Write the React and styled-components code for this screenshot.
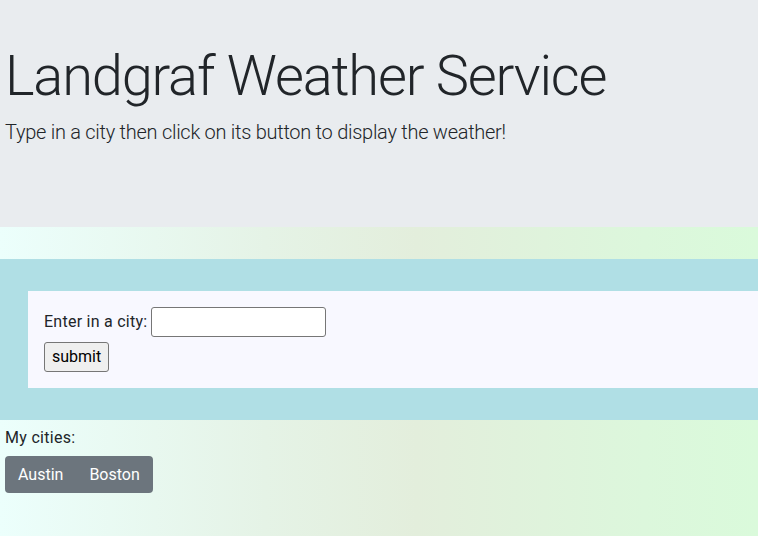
import React from "react";
import styled, { createGlobalStyle } from "styled-components";

const Global = createGlobalStyle`
  html, body { margin: 0; padding: 0; }
  body {
    font-family: Roboto, "Noto Sans", "Liberation Sans", sans-serif;
    color: #212529;
    font-size: 16px;
    line-height: 1.5;
    min-height: 536px;
    background: linear-gradient(to right, #ecfffc 0%, #e5f3e6 35%, #e3eedc 55%, #dcf7dc 85%, #dafadb 100%);
  }
`;

const Page = styled.div`
  display: flex;
  flex-direction: column;
`;

const Jumbotron = styled.header`
  background: #e9ecef;
  height: 227px;
  box-sizing: border-box;
  padding: 43px 0 0 5px;
  margin-bottom: 32px;
`;

const Title = styled.h1`
  margin: 0 0 7px;
  font-size: 56px;
  font-weight: 300;
  line-height: 1.2;
  letter-spacing: -1.2px;
`;

const Lead = styled.p`
  margin: 0;
  font-size: 20px;
  font-weight: 300;
  line-height: 1.5;
  letter-spacing: -0.27px;
`;

const Band = styled.section`
  background: #b0dfe5;
  padding: 32px 0 32px 28px;
`;

const Panel = styled.form`
  background: #f8f8ff;
  padding: 16px;
  display: flex;
  flex-direction: column;
  align-items: flex-start;
  gap: 5px;
`;

const Row = styled.div`
  display: flex;
  align-items: center;
  gap: 4px;
  height: 30px;
`;

const Label = styled.label`
  font-size: 16px;
  letter-spacing: 0.25px;
`;

const Input = styled.input`
  box-sizing: border-box;
  width: 175px;
  height: 30px;
  border: 1px solid #767676;
  border-radius: 3px;
  background: #fff;
  font: inherit;
  padding: 1px 2px;
`;

const Submit = styled.button`
  box-sizing: border-box;
  height: 30px;
  padding: 0 7px;
  font: inherit;
  font-size: 16px;
  color: #000;
  background: #efefef;
  border: 1px solid #767676;
  border-radius: 3px;
`;

const Cities = styled.section`
  padding: 6px 5px 0;
  display: flex;
  flex-direction: column;
  align-items: flex-start;
  gap: 6px;
`;

const CitiesLabel = styled.div`
  font-size: 16px;
  line-height: 24px;
  letter-spacing: 0.3px;
`;

const Group = styled.div`
  display: inline-flex;
  background: #6c757d;
  border-radius: 4px;
  overflow: hidden;
`;

const CityButton = styled.button`
  border: 0;
  background: transparent;
  color: #fff;
  font: inherit;
  font-size: 16px;
  line-height: 24px;
  padding: 7px 13px 6px;
`;

export default function App() {
  return (
    <Page>
      <Global />
      <Jumbotron>
        <Title>Landgraf Weather Service</Title>
        <Lead>Type in a city then click on its button to display the weather!</Lead>
      </Jumbotron>
      <Band>
        <Panel onSubmit={(e) => e.preventDefault()}>
          <Row>
            <Label htmlFor="city">Enter in a city:</Label>
            <Input id="city" type="text" />
          </Row>
          <Submit type="submit">submit</Submit>
        </Panel>
      </Band>
      <Cities>
        <CitiesLabel>My cities:</CitiesLabel>
        <Group>
          <CityButton>Austin</CityButton>
          <CityButton>Boston</CityButton>
        </Group>
      </Cities>
    </Page>
  );
}
